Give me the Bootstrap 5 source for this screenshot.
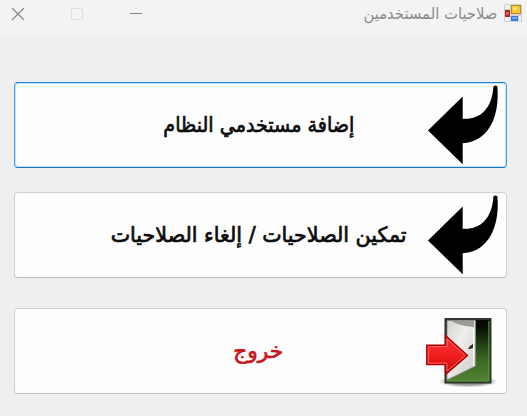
<!DOCTYPE html>
<html lang="ar" dir="rtl">
<head>
<meta charset="utf-8">
<meta name="viewport" content="width=device-width, initial-scale=1">
<title>صلاحيات المستخدمين</title>
<link rel="stylesheet" href="https://cdn.jsdelivr.net/npm/bootstrap@5.3.0/dist/css/bootstrap.min.css">
<style>
body{background:#efefef;font-family:"DejaVu Sans",sans-serif;height:416px;overflow:hidden}
.titlebar{height:34px;background:#f3f3f3;padding:0 5px 6px 11px}
.app-icon{margin-bottom:2px}
.win-title{font-size:16px;line-height:28px;color:#8c8c8c;width:135px;margin-right:6px}
.controls{gap:45px}
.actions{padding:48px 20px 0 14px}
.action{height:86px;background:#fdfdfd;border:1px solid #d0d0d0;border-bottom-color:#bcbcbc;border-radius:4px;--bs-btn-padding-x:0;--bs-btn-padding-y:0}
.action:hover{background:#fdfdfd}
.action.chosen,.action.chosen:hover{border-color:#1a84d6 #4ba0e3 #1777c4;box-shadow:inset 0 0 0 1px #c3e0f6}
.caption{font-size:21px;color:#0c0c0c;line-height:30px;-webkit-text-stroke:.7px currentColor;padding-right:4px}
.fit{display:block;white-space:nowrap;flex:none}
.side{width:80px;height:84px}
.gap-a{margin-bottom:24px}
.gap-b{margin-bottom:30px}
.exit{color:#c8141c}
</style>
<script src="https://cdn.jsdelivr.net/npm/bootstrap@5.3.0/dist/js/bootstrap.bundle.min.js"></script>
</head>
<body>
<header class="titlebar d-flex align-items-center">
<svg class="app-icon" width="18" height="18" viewBox="0 0 18 18"><rect width="18" height="18" rx="1" fill="#d2d2d2"/><path d="M1 1h5v4H1zM1 13h5v4H1z" fill="#f0f0f0"/><path d="M1 6h5v7H1z" fill="#a52a24"/><path d="M2 8h3v3H2z" fill="#d8645a"/><path d="M7 1h10v9H7z" fill="#c08a1a"/><path d="M8 2h8v7H8z" fill="#f9c62f"/><path d="M9 3h4v3H9z" fill="#ffe07a"/><path d="M7 12h7v5H7z" fill="#3f78d6"/><path d="M8 13h5v2H8z" fill="#76a5f0"/><path d="M15 12h2v5h-2z" fill="#f0f0f0"/></svg>
<div class="win-title d-flex justify-content-center"><span class="fit" data-width="134">صلاحيات المستخدمين</span></div>
<div class="controls d-flex align-items-center me-auto">
<svg width="14" height="14" viewBox="0 0 14 14"><path d="M1 6.5h12" stroke="#858585"/></svg>
<svg width="14" height="14" viewBox="0 0 14 14"><rect x="1.5" y="1.5" width="11" height="11" rx="1" fill="none" stroke="#dcdcdc"/></svg>
<svg width="14" height="14" viewBox="0 0 14 14"><path d="M1 1l12 12M13 1L1 13" stroke="#858585" stroke-width="1.1"/></svg>
</div>
</header>
<main class="actions d-flex flex-column">
<button class="btn action chosen gap-a d-flex align-items-center">
<svg class="side flex-shrink-0" viewBox="426 83 80 84"><path d="M428 130.5L462.7 96.5V118.7C479 120 492 110 493.4 86.5Q495.5 84.5 497.4 86.5C500 119 487 142 462.7 143.3V164.3Z" fill="#000"/></svg>
<span class="caption flex-grow-1 d-flex justify-content-center"><span class="fit" data-width="191">إضافة مستخدمي النظام</span></span>
<span class="side flex-shrink-0"></span>
</button>
<button class="btn action gap-b d-flex align-items-center">
<svg class="side flex-shrink-0" viewBox="426 83 80 84"><path d="M428 130.5L462.7 96.5V118.7C479 120 492 110 493.4 86.5Q495.5 84.5 497.4 86.5C500 119 487 142 462.7 143.3V164.3Z" fill="#000"/></svg>
<span class="caption flex-grow-1 d-flex justify-content-center"><span class="fit" data-width="296">تمكين الصلاحيات / إلغاء الصلاحيات</span></span>
<span class="side flex-shrink-0"></span>
</button>
<button class="btn action d-flex align-items-center">
<svg class="side flex-shrink-0" viewBox="426 309 80 84">
<defs>
<linearGradient id="green" x2="0" y2="1"><stop offset=".1" stop-color="#050a03"/><stop offset=".65" stop-color="#3b6a22"/><stop offset="1" stop-color="#548435"/></linearGradient>
<linearGradient id="leaf" x2="1" y2="1"><stop stop-color="#d2d3ce"/><stop offset=".4" stop-color="#eeeeec"/><stop offset="1" stop-color="#c8c9c4"/></linearGradient>
<linearGradient id="red" x2="0" y2="1"><stop stop-color="#f03535"/><stop offset=".5" stop-color="#f12020"/><stop offset="1" stop-color="#c50505"/></linearGradient>
<radialGradient id="shade"><stop offset=".6" stop-color="#555" stop-opacity=".6"/><stop offset="1" stop-color="#777" stop-opacity="0"/></radialGradient>
</defs>
<ellipse cx="468" cy="381.500" rx="30" ry="6" fill="url(#shade)"/>
<rect x="445.500" y="319" width="45" height="63.500" fill="url(#green)" stroke="#30352e" stroke-width="2"/>
<path d="M488.800 321V380.800H447" fill="none" stroke="#5d9a38"/>
<path d="M447 320.500H475.500V366L447 380Z" fill="url(#leaf)" stroke="#858783" stroke-width=".8"/>
<path d="M450 320.500H474V327Q460 326 450 320.500Z" fill="#999b96"/>
<path d="M473.500 328V366.500" stroke="#fafafa" stroke-width="1"/>
<path d="M468 349l2-3 3-2v4l-3 1z" fill="#292d2c"/>
<path d="M426.800 345.200H445.500V335.500L467.500 355.500L445.500 374.500V364.600H426.800Z" fill="url(#red)" stroke="#a90000" stroke-width="1.400"/>
<path d="M428.300 346.700H447V339L465.300 355.500L447 371.200V363.100H428.300Z" fill="none" stroke="#ff7474" stroke-width=".8"/>
</svg>
<span class="caption exit flex-grow-1 d-flex justify-content-center"><span class="fit" data-width="50">خروج</span></span>
<span class="side flex-shrink-0"></span>
</button>
</main>
<script>
// Condense each label horizontally so that it fills the intended width.
document.querySelectorAll('.fit').forEach(function (el) {
  el.style.transform = 'scaleX(' + el.dataset.width / el.getBoundingClientRect().width + ')';
});
</script>
</body>
</html>
